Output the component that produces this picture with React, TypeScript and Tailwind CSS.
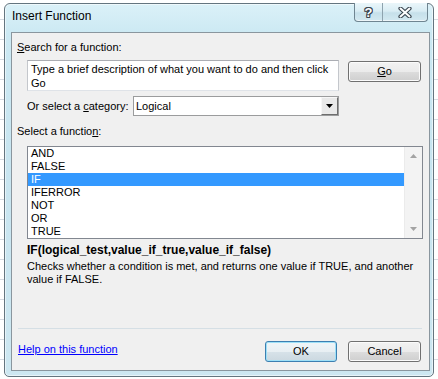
import React from "react";

function Win7Button({
  children,
  className = "",
  isDefault = false,
}: {
  children: React.ReactNode;
  className?: string;
  isDefault?: boolean;
}) {
  return (
    <div
      className={
        "flex items-center justify-center h-[21px] rounded-[3px] border text-[11px] leading-[13px] text-black " +
        (isDefault
          ? "border-[#3c7fb1] shadow-[inset_0_0_0_1px_#9ee0f7] bg-[linear-gradient(to_bottom,#f0f5f8_0%,#e8eff3_50%,#d7e2e9_51%,#cbd8e0_100%)] "
          : "border-[#707070] shadow-[inset_0_0_0_1px_#fbfbfb] bg-[linear-gradient(to_bottom,#f2f2f2_0%,#ebebeb_50%,#dddddd_51%,#cfcfcf_100%)] ") +
        className
      }
    >
      {children}
    </div>
  );
}

export default function App() {
  const items = ["AND", "FALSE", "IF", "IFERROR", "NOT", "OR", "TRUE"];
  return (
    <div className="w-[438px] h-[379px] overflow-hidden pt-[3px] pl-[4px] bg-[repeating-linear-gradient(to_bottom,#ffffff_0px,#ffffff_19px,#d6dbe2_19px,#d6dbe2_20px)] font-['Liberation_Sans',Arial,sans-serif] text-black">
      <div className="w-[430px] h-[374px] rounded-t-[6px] rounded-b-[5px] border border-[#64757f] bg-[linear-gradient(to_bottom,#dbf1f8_0%,#cce9f3_8%,#c8e5f0_40%,#cde7f1_100%)] shadow-[inset_0_0_0_1px_rgba(255,255,255,0.55)] flex flex-col">
        {/* title bar */}
        <div className="h-[28px] shrink-0 flex items-start">
          <div className="pl-[7px] pt-[4px] text-[12px] leading-[16px] text-black">
            Insert Function
          </div>
          <div className="ml-auto mr-[5px] -mt-px flex h-[19px] rounded-b-[4px] border border-t-0 border-[#6f8591] bg-[linear-gradient(to_bottom,#eaf6fa_0%,#d9edf4_45%,#c6e0ea_55%,#d3e9f1_100%)] shadow-[inset_0_-1px_0_rgba(255,255,255,0.6)]">
            <div className="w-[28px] h-full flex items-center justify-center border-r border-[#8ea3ae] text-[13px] font-bold leading-[13px] text-white [text-shadow:1px_0_#3a4650,-1px_0_#3a4650,0_1px_#3a4650,0_-1px_#3a4650,1px_1px_#3a4650,-1px_-1px_#3a4650,1px_-1px_#3a4650,-1px_1px_#3a4650]">
              ?
            </div>
            <div className="w-[44px] h-full flex items-center justify-center">
              <svg width="14" height="11" viewBox="0 0 14 11">
                <path d="M2.5 1.5 L11.5 9.5 M11.5 1.5 L2.5 9.5" stroke="#3a4650" strokeWidth="4.2" strokeLinecap="round" fill="none" />
                <path d="M2.5 1.5 L11.5 9.5 M11.5 1.5 L2.5 9.5" stroke="#ffffff" strokeWidth="2" strokeLinecap="round" fill="none" />
              </svg>
            </div>
          </div>
        </div>

        {/* client area */}
        <div className="ml-[6px] mr-[3px] mb-[5px] flex-1 border border-[#8a969e] bg-[#f0f0f0] flex flex-col pl-[5px] text-[11px] leading-[13px]">
          <div className="mt-[8px] h-[13px]">
            <u>S</u>earch for a function:
          </div>

          <div className="mt-[6px] flex items-start">
            <div className="ml-[10px] w-[312px] h-[31px] border border-[#abadb3] border-b-[#dfe3e8] border-l-[#c4c7cc] border-r-[#c4c7cc] bg-white pl-[3px] pt-[2px] leading-[13.5px]">
              Type a brief description of what you want to do and then click
              <br />
              Go
            </div>
            <Win7Button className="ml-[9px] mt-px w-[73px]">
              <span>
                <u>G</u>o
              </span>
            </Win7Button>
          </div>

          <div className="mt-[5px] flex items-center h-[20px]">
            <div className="ml-[10px] w-[106px] whitespace-nowrap">
              Or select a <u>c</u>ategory:
            </div>
            <div className="w-[206px] h-[20px] border border-[#9b9c9d] bg-white flex items-stretch">
              <div className="flex-1 pl-[2px] flex items-center">Logical</div>
              <div className="w-[17px] border border-t-[#f7f7f7] border-l-[#f7f7f7] border-b-[#6e6e6e] border-r-[#6e6e6e] bg-[#e9e9e9] flex items-center justify-center">
                <svg width="7" height="4" viewBox="0 0 7 4">
                  <path d="M0 0 H7 L3.5 4 Z" fill="#000" />
                </svg>
              </div>
            </div>
          </div>

          <div className="mt-[9px] h-[13px]">
            Select a functio<u>n</u>:
          </div>

          <div className="mt-[8px] ml-[10px] w-[396px] h-[93px] border border-[#828790] bg-white flex">
            <div className="flex-1 flex flex-col">
              {items.map((it) => (
                <div
                  key={it}
                  className={
                    "h-[13px] leading-[13px] pl-[3px] " +
                    (it === "IF" ? "bg-[#3399ff] text-white" : "text-black")
                  }
                >
                  {it}
                </div>
              ))}
            </div>
            <div className="w-[18px] bg-[#f3f3f3] border-l border-[#ebebeb] flex flex-col items-center justify-between py-[7px]">
              <svg width="7" height="4" viewBox="0 0 7 4">
                <path d="M0 4 H7 L3.5 0 Z" fill="#a3a3a3" />
              </svg>
              <svg width="7" height="4" viewBox="0 0 7 4">
                <path d="M0 0 H7 L3.5 4 Z" fill="#a3a3a3" />
              </svg>
            </div>
          </div>

          <div className="mt-[5px] h-[13px] text-[12px] leading-[13px] font-bold ml-[10px] whitespace-nowrap">
            IF(logical_test,value_if_true,value_if_false)
          </div>
          <div className="mt-[3px] ml-[10px] whitespace-nowrap">
            Checks whether a condition is met, and returns one value if TRUE, and another
            <br />
            value if FALSE.
          </div>

          <div className="mt-auto ml-[1px] w-[404px] h-px bg-[#d5dfe5]" />

          <div className="mt-[12px] mb-[8px] h-[21px] flex items-start">
            <div className="ml-[1px] pt-[2px] text-[#0000ff] underline whitespace-nowrap">
              Help on this function
            </div>
            <Win7Button isDefault className="ml-auto w-[72px]">
              OK
            </Win7Button>
            <Win7Button className="ml-[11px] mr-[8px] w-[73px]">Cancel</Win7Button>
          </div>
        </div>
      </div>
    </div>
  );
}
